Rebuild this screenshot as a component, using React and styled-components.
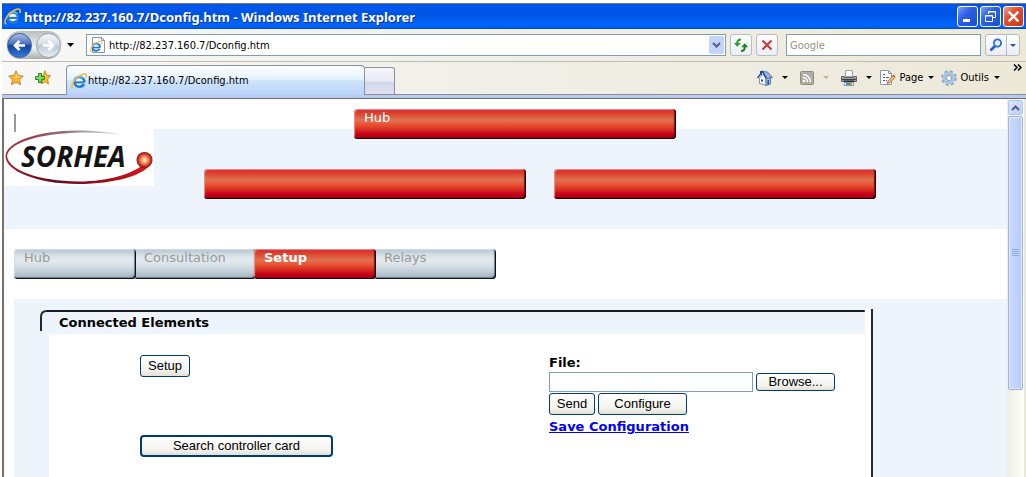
/* ^ App ^ */
/* browser window (title bar, address row, tab row) with the Sorhea configuration page inside */

import React, { useState }            from 'react';
import styled, { createGlobalStyle }  from 'styled-components';

const GlobalStyle = createGlobalStyle`
  * {
    box-sizing: border-box;
  }

  body {
    margin: 0;
    background-color: white;
    overflow: hidden;
  }

  button, input {
    margin: 0;
    padding: 0;
    font: inherit;
    color: inherit;
  }
`;

const Window = styled.div`
  height: 100vh;
  padding: 3px 0 0 2px;
  display: flex;
  flex-direction: column;
  font-family: "DejaVu Sans Condensed", "Noto Sans", sans-serif;
  font-size: 11px;
  color: black;
`;

/* title bar */

const TitleBar = styled.header`
  height: 26px;
  flex: none;
  padding: 0 2px 0 2px;
  display: flex;
  align-items: center;
  gap: 3px;
  border-top: 1px solid #7d7766;
  background: linear-gradient(#0a50d8, #0058ee 3px, #0053e1 10px, #0065fc 20px, #0062f6 23px, #0046cf);
`;

const Title = styled.h1`
  margin: 0;
  flex: 1;
  font-family: "Noto Sans", sans-serif;
  font-size: 13px;
  line-height: 16px;
  font-weight: bold;
  color: white;
  text-shadow: 1px 1px #0a2f8c;
`;

const WindowButton = styled.button`
  width: 21px;
  height: 21px;
  display: flex;
  align-items: center;
  justify-content: center;
  border: 1px solid white;
  border-radius: 3px;
  background: ${props => props.$close
    ? 'linear-gradient(135deg, #f0a088, #e2502c 40%, #c9371a)'
    : 'linear-gradient(135deg, #7ba0f4, #2c5fe4 40%, #1f4fd0)'};
`;

const WindowButtons = styled.div`
  display: flex;
  gap: 2px;
`;

/* toolbars */

const Bar = styled.div`
  flex: none;
  display: flex;
  background: linear-gradient(to right, #f8f8f8, #f1f0ea 40%, #ece9d8);
`;

const AddressRow = styled(Bar)`
  height: 33px;
  padding: 0 6px 0 4px;
  align-items: center;
  gap: 4px;
  border-bottom: 1px solid #c0beb4;
`;

const HistoryButtons = styled.div`
  width: 56px;
  height: 28px;
  display: flex;
  align-items: center;
  justify-content: space-between;
  padding: 0 1px;
  border-radius: 14px;
  background: linear-gradient(#b9bcc0, #f2f3f4 60%, #a9abad);
`;

const RoundButton = styled.button`
  width: 25px;
  height: 25px;
  display: flex;
  align-items: center;
  justify-content: center;
  border: 1px solid ${props => props.$active ? '#3a5c98' : '#9aa4ae'};
  border-radius: 50%;
  background: ${props => props.$active
    ? 'linear-gradient(#a9bde2, #4a74be 42%, #1243a2 52%, #2f7fd8)'
    : 'linear-gradient(#f4f6f8, #d8dfe6 42%, #bccad6 52%, #e6eef4)'};
`;

const PlainButton = styled.button`
  display: flex;
  align-items: center;
  gap: 3px;
  border: 0;
  background: none;
`;

const HistoryMenu = styled(PlainButton)`
  width: 8px;
  justify-content: center;
`;

const Field = styled.div`
  height: 22px;
  display: flex;
  align-items: center;
  border: 1px solid #7f9db9;
  background-color: white;
`;

const AddressField = styled(Field)`
  flex: 1;
  margin-left: 8px;
  padding: 0 1px 0 3px;
`;

const SearchField = styled(Field)`
  width: 195px;
  margin-left: 4px;
`;

const FieldInput = styled.input`
  flex: 1;
  min-width: 0;
  margin-left: 3px;
  border: 0;
  outline: 0;
  background: none;

  &::placeholder {
    color: #96938a;
    opacity: 1;
  }
`;

const DropButton = styled.button`
  width: 15px;
  height: 18px;
  display: flex;
  align-items: center;
  justify-content: center;
  border: 0;
  border-radius: 2px;
  background-color: #c3d3fb;
`;

const ToolButton = styled.button`
  width: 22px;
  height: 22px;
  display: flex;
  align-items: center;
  justify-content: center;
  border: 1px solid #b4bccb;
  border-radius: 3px;
  background: linear-gradient(#fdfdfd, #eceef6);
`;

const SplitButton = styled.div`
  display: flex;
`;

const SplitMain = styled(ToolButton)`
  border-radius: 3px 0 0 3px;
`;

const SplitMenu = styled(ToolButton)`
  width: 14px;
  margin-left: -1px;
  border-radius: 0 3px 3px 0;
`;

const TabRow = styled(Bar)`
  height: 33px;
  align-items: flex-end;
  padding-left: 6px;
  border-bottom: 1px solid #8d8f96;
`;

const Favourites = styled.div`
  width: 58px;
  height: 33px;
  display: flex;
  align-items: center;
  gap: 11px;
`;

const Tab = styled.button`
  width: 299px;
  height: 30px;
  margin-bottom: -1px;
  padding: 0 4px;
  display: flex;
  align-items: center;
  gap: 1px;
  border: 1px solid #8d9099;
  border-bottom: 0;
  border-radius: 4px 4px 0 0;
  background: linear-gradient(#fdfeff, #e4f1fd 45%, #cfe5fb 50%, #b9d3f8);
`;

const NewTab = styled.button`
  width: 30px;
  height: 27px;
  border: 1px solid #8d9099;
  border-width: 1px 1px 0 0;
  border-radius: 0 3px 0 0;
  background: linear-gradient(#f6f6fb, #e9eaf4 50%, #d3d6ea 55%, #dfe1f0);
`;

const Commands = styled.div`
  flex: 1;
  height: 33px;
  padding-right: 3px;
  display: flex;
  align-items: center;
  justify-content: flex-end;
`;

const Command = styled(PlainButton)`
  margin-right: ${props => props.$near ? '7px' : '12px'};

  svg:last-child {
    margin-left: ${props => props.$label ? '2px' : '6px'};
  }
`;

const More = styled(PlainButton)`
  height: 27px;
  align-items: flex-start;
  margin-left: 6px;
`;

const TabBase = styled.div`
  height: 4px;
  flex: none;
  border-bottom: 1px solid #716f64;
  background-color: #b8c9f2;
`;

/* page */

const Viewport = styled.div`
  flex: 1;
  min-height: 0;
  display: flex;
  border-left: 2px solid #77736a;
  border-right: 2px solid #ece9d8;
`;

const Page = styled.main`
  flex: 1;
  min-width: 0;
  overflow: hidden;
  font-family: Verdana, "DejaVu Sans", sans-serif;
  font-size: 13px;
  line-height: 16px;
  background-color: white;
`;

const Banner = styled.div`
  height: 130px;
  display: flex;
  gap: 50px;
  background: linear-gradient(white 30px, #edf4fc 30px);
`;

const Brand = styled.div`
  width: 150px;
  padding-top: 15px;
  display: flex;
  flex-direction: column;
`;

const Caret = styled.span`
  width: 2px;
  height: 18px;
  margin: 0 0 -3px 10px;
  z-index: 1;
  background-color: #999;
`;

const Plates = styled.div`
  padding-top: 10px;
  display: grid;
  grid-template-columns: 322px 322px;
  grid-auto-rows: 30px;
  gap: 30px 28px;
`;

const red = 'linear-gradient(#c8202c, #d9303a 2px, #dd3f28 4px, #dd7355 11px, #ea5636 15px, #d93420 20px, #c8001a 25px, #b0000e)';
const grey = 'linear-gradient(#b4c2cc, #c3d0d9 3px, #dbe3e8 7px, #e4eaee 12px, #d5dee4 17px, #c3cfd8 22px, #9fb1bf)';

const Plate = styled.div`
  width: 322px;
  height: 30px;
  padding: 1px 0 0 10px;
  color: white;
  border-radius: 4px;
  background: ${red};
  box-shadow: inset -1px -1px #1a0004, inset -2px -2px 1px #8c0812, inset 1px 1px 1px #f09088;
`;

const TopPlate = styled(Plate)`
  grid-column: 1 / 3;
  margin-left: 150px;
`;

const Menu = styled.nav`
  padding: 20px 0 20px 10px;
  display: flex;
`;

const MenuItem = styled.a`
  width: 122px;
  height: 30px;
  margin-right: -2px;
  padding: 1px 0 0 10px;
  z-index: ${props => props.$layer};
  color: ${props => props.$active ? 'white' : '#999'};
  font-weight: ${props => props.$active ? 'bold' : 'normal'};
  text-decoration: none;
  border-radius: 4px;
  background: ${props => props.$active ? red : grey};
  box-shadow:
    inset -1px -1px #0c1016,
    inset -2px -2px 1px ${props => props.$active ? '#8c0812' : '#6f8290'},
    inset 1px 1px 1px ${props => props.$active ? '#f09088' : '#d4dee6'};
`;

const Body = styled.div`
  height: 100%;
  margin-left: 10px;
  padding: 10px 0 0 26px;
  background-color: #edf4fb;
`;

const Panel = styled.section`
  max-width: 833px;
  height: 100%;
  padding-right: 5px;
  border-right: 2px solid #2c2a2e;
  background: linear-gradient(to left, white 6px, transparent 6px);
`;

const PanelTitle = styled.h2`
  height: 25px;
  margin: 0;
  padding: 6px 0 0 19px;
  position: relative;
  font-size: 13px;
  line-height: 16px;
`;

/* rounded frame line over the panel title */
const Frame = styled.svg`
  position: absolute;
  top: 0;
  left: 0;
  width: 100%;
  height: 25px;
`;

const PanelBody = styled.div`
  height: 100%;
  margin-left: 9px;
  padding: 21px 0 0 91px;
  display: flex;
  border-right: 1px solid #edf4fb;
  background-color: white;
`;

const Actions = styled.div`
  width: 409px;
  display: flex;
  flex-direction: column;
  align-items: flex-start;
  gap: 58px;
`;

const Button = styled.button`
  width: ${props => props.$width};
  height: ${props => props.$low ? '18px' : '22px'};
  font-family: "Liberation Sans", Arial, sans-serif;
  font-size: 13px;
  line-height: 16px;
  border: ${props => props.$default ? 2 : 1}px solid #003c74;
  border-radius: ${props => props.$default ? 4 : 3}px;
  background: linear-gradient(white, #f4f3ee 70%, #e2dfd4);
`;

const Form = styled.form`
  display: flex;
  flex-direction: column;
  align-items: flex-start;
`;

const Label = styled.label`
  font-weight: bold;
`;

const FormRow = styled.div`
  height: 22px;
  display: flex;
  align-items: center;
  gap: 3px;
`;

const FileInput = styled.input`
  width: 204px;
  height: 20px;
  padding: 0 3px;
  border: 1px solid #7f9db9;
  background-color: white;
`;

const SaveLink = styled.a`
  margin-top: 4px;
  color: #0000ff;
  font-weight: bold;
  text-decoration: underline;
`;

/* scroll bar */

const Scroll = styled.div`
  width: 17px;
  flex: none;
  padding: 1px;
  display: flex;
  flex-direction: column;
  gap: 1px;
  background: linear-gradient(to right, #eeede5, #fefefb);
`;

const ScrollButton = styled.button`
  width: 15px;
  height: 15px;
  display: flex;
  align-items: center;
  justify-content: center;
  border: 1px solid #b3c7f5;
  border-radius: 2px;
  background: linear-gradient(135deg, #dde7fe, #b9cdfa);
`;

const Thumb = styled.div`
  height: 73%;
  display: flex;
  align-items: center;
  justify-content: center;
  border: 1px solid #98b2ee;
  border-radius: 2px;
  box-shadow: inset 0 0 0 1px #e4ecff;
  background: linear-gradient(to right, #c9d7fc, #c2d3fc 60%, #b2c7f6);
`;

/* drawings */

const Explorer = ({ size, sheet }) => (
  <svg width={size} height={size} viewBox="0 0 16 16">
    {sheet && <path d="M2.5.5h9l3 3v12h-12z" fill="white" stroke="#8b94a3" />}
    {sheet && <path d="M11.5.5v3h3" fill="none" stroke="#8b94a3" />}
    <g transform={sheet ? 'translate(0 3.500) scale(.75)' : undefined}>
      <circle cx="8.300" cy="8.800" r="5" fill="#e8f5ff" />
      <path d="M13.200 9.200C13.500 5.800 11.200 4 8.400 4 5.500 4 3.500 6.200 3.500 8.900s2 4.800 4.900 4.800c2 0 3.600-.9 4.400-2.500" fill="none" stroke="#1f7ad8" strokeWidth="2.600" />
      <path d="M4 9.400h9.500" stroke="#1f7ad8" strokeWidth="2" />
      <path d="M3.800 7.200C4.600 5 6.300 3.700 8.600 3.700c1.700 0 3 .7 3.800 1.800" fill="none" stroke="#6cc0f8" strokeWidth="1.200" />
      <path d="M2.400 14.800C-.2 15 .4 11.200 3.600 7.200 7.200 2.900 12.800-.1 14.900 1.400c.8.7.6 2-.1 3.400" fill="none" stroke="#f4bc38" strokeWidth="1.400" />
    </g>
  </svg>
);

const Arrow = ({ back }) => (
  <svg width="15" height="15" viewBox="0 0 15 15">
    <path
      d="M7.500 3 3 7.500 7.500 12M3.500 7.500h9.500"
      transform={back ? undefined : 'rotate(180 7.500 7.500)'}
      fill="none" stroke="white" strokeWidth="2.600"
    />
  </svg>
);

const Down = ({ color = 'black' }) => (
  <svg width="7" height="4" viewBox="0 0 7 4"><path d="M0 0h7L3.500 4z" fill={color} /></svg>
);

const SmallDown = ({ color = 'black' }) => (
  <svg width="6" height="3" viewBox="0 0 6 3"><path d="M0 0h6L3 3z" fill={color} /></svg>
);

const Chevron = ({ up }) => (
  <svg width="9" height="6" viewBox="0 0 9 6">
    <path d={up ? 'M1 5 4.500 1.500 8 5' : 'M1 1l3.500 3.500L8 1'} fill="none" stroke="#4d6185" strokeWidth="2" />
  </svg>
);

const Cross = ({ size, color }) => (
  <svg width={size} height={size} viewBox="0 0 12 12">
    <path d="M1.500 1.500l9 9M10.500 1.500l-9 9" stroke={color} strokeWidth="2.200" />
  </svg>
);

const Refresh = () => (
  <svg width="16" height="16" viewBox="0 0 16 16">
    <path d="M8 2.500C5.500 2.500 4.200 4 4.200 6.500" fill="none" stroke="#2c9a2c" strokeWidth="2" />
    <path d="M.8 6h7L4.300 9.800z" fill="#2c9a2c" />
    <path d="M8 14c2.500 0 3.800-1.500 3.800-4" fill="none" stroke="#1f8420" strokeWidth="2" />
    <path d="M8.200 10.200h7L11.700 6.200z" fill="#1f8420" />
  </svg>
);

const Magnifier = () => (
  <svg width="14" height="14" viewBox="0 0 14 14">
    <path d="M6 8 1.500 12.500" stroke="#2459d6" strokeWidth="2.600" />
    <circle cx="8.500" cy="5" r="3.600" fill="#e4f0ff" stroke="#2f6be0" strokeWidth="1.800" />
  </svg>
);

const starPath = 'M8 .8l2.200 4.700 5.100.6-3.800 3.500 1 5.100L8 12.200l-4.500 2.500 1-5.100L.7 6.100l5.100-.6z';

const Star = () => (
  <svg width="16" height="16" viewBox="0 0 16 16">
    <path d={starPath} fill="#fdb52d" stroke="#b8741c" strokeWidth=".8" />
    <path d="M8 3l1.300 3.300 3.200.4-5 1.300z" fill="#ffe48c" />
  </svg>
);

const AddStar = () => (
  <svg width="16" height="16" viewBox="0 0 16 16">
    <path d={starPath} transform="translate(4 0) scale(.75 .95)" fill="#fdbf2d" stroke="#c07a12" />
    <path d="M3.500 3.500h3v3h3v3h-3v3h-3v-3h-3v-3h3z" fill="#7fd85c" stroke="#1f8a26" />
  </svg>
);

const Home = () => (
  <svg width="16" height="16" viewBox="0 0 16 16">
    <path d="M3 1h2v4H3z" fill="#2040a8" />
    <path d="M2.500 8 6 4.500l3 4v7l-6.500-2z" fill="#f4f7fc" stroke="#8294b4" />
    <path d="M9 8.500l4.500-1V14L9 15.500z" fill="#a9bede" stroke="#6078a4" />
    <path d="M5.500 1.500l5 .5 5 5.500-6.500 1z" fill="#9cb4dc" stroke="#5470a8" />
    <path d="M.5 8 5.500 1.500 9.500 8.500" fill="none" stroke="#2848a8" strokeWidth="1.300" />
    <path d="M4 9.500h2v2H4z" fill="#2a4480" />
    <path d="M10.500 10H12v4.200l-1.500.5z" fill="#1c4cb0" />
  </svg>
);

const Feed = () => (
  <svg width="14" height="14" viewBox="0 0 14 14">
    <rect x=".5" y=".5" width="13" height="13" rx="1" fill="#b0ada4" stroke="#8e8b82" />
    <circle cx="4" cy="10" r="1.300" fill="white" />
    <path d="M3 6.500c2.500 0 4.500 2 4.500 4.500M3 3.500c4 0 7.500 3.500 7.500 7.500" fill="none" stroke="white" strokeWidth="1.400" />
  </svg>
);

const Printer = () => (
  <svg width="16" height="16" viewBox="0 0 16 16">
    <path d="M4.500.5h7v6h-7z" fill="#fafafa" stroke="#a0a0a0" />
    <path d="M.5 6.500h3v1h9v-1h3v5H.5z" fill="#9c9fa4" stroke="#606266" />
    <path d="M1 9.500h14" stroke="#3c3e42" />
    <path d="M3 10.500h10V12H3z" fill="#2a2c30" />
    <path d="M3.500 12.500h9l.5 3H3z" fill="#e4f0ff" stroke="#8c9cb4" />
    <path d="M5 14h2" stroke="#2c9ad0" strokeWidth="2" />
    <path d="M7 14h2" stroke="#48a048" strokeWidth="2" />
    <path d="M9 14h2" stroke="#e08838" strokeWidth="2" />
  </svg>
);

const PageIcon = () => (
  <svg width="17" height="16" viewBox="0 0 17 16">
    <path d="M1.500.5h8l3 3v11h-11z" fill="#fbfcff" stroke="#8c98b0" />
    <path d="M9.500.5v3h3" fill="none" stroke="#8c98b0" />
    <path d="M4 4.500h2M4 7.500h2M7 7.500h3M4 10.500h2M7 10.500h1" stroke="#3c58a0" />
    <path d="M8 13.500l1-2.500 5-5.500 2 1.800-5 5.400z" fill="#f0c070" stroke="#94683a" strokeWidth=".8" />
    <path d="M13.500 5.500l1-1 2 1.800-1 1z" fill="#d04a34" />
  </svg>
);

const Gear = () => (
  <svg width="16" height="16" viewBox="0 0 16 16">
    <circle cx="8" cy="8" r="6.500" fill="none" stroke="#8aa4c0" strokeWidth="2.600" strokeDasharray="2.900 2.205" />
    <circle cx="8" cy="8" r="4.600" fill="#f4f4ec" stroke="#a8c4e0" strokeWidth="3.400" />
    <circle cx="8" cy="8" r="2.600" fill="#f8f6ec" stroke="#6f8cae" strokeWidth=".9" />
  </svg>
);

const Logo = () => (
  <svg width="150" height="57" viewBox="0 0 150 57">
    <defs>
      <linearGradient id="ring" x1="0" x2="1" y1="0" y2="0">
        <stop offset="0" stopColor="#b01828" />
        <stop offset=".35" stopColor="#5a1020" />
        <stop offset=".7" stopColor="#a00c1c" />
        <stop offset="1" stopColor="#e01818" />
      </linearGradient>
      <linearGradient id="fade" x1="0" x2="1" y1="0" y2="0">
        <stop offset="0" stopColor="#a81c2c" />
        <stop offset=".5" stopColor="#8c7478" />
        <stop offset="1" stopColor="#eeeeee" />
      </linearGradient>
      <radialGradient id="ball">
        <stop offset="0" stopColor="#fff4c8" />
        <stop offset=".4" stopColor="#f49a60" />
        <stop offset=".75" stopColor="#d83828" />
        <stop offset="1" stopColor="#801018" />
      </radialGradient>
    </defs>
    <rect width="150" height="57" fill="white" />
    <path d="M1.500 27C3 12 35 2 72 1.500c20 0 34 1.500 47 4.500-14-1.700-28-2.700-46-2.300C38 4.500 5 13 3 27z" fill="url(#fade)" />
    <path d="M1.500 27c0 15 31 27.800 73 28 36 0 66-9 72-20l-6-1c-9 10-35 18.500-66 18.500C34 52 4 41 3 27z" fill="url(#ring)" />
    <text
      x="17" y="38" fontFamily="'Open Sans', sans-serif" fontSize="28" fontWeight="bold" fontStyle="italic" fill="#141416"
    >SORHEA</text>
    <circle cx="140.500" cy="31" r="8" fill="url(#ball)" />
  </svg>
);

const menu = [
  { title: 'Hub',          layer: 1 },
  { title: 'Consultation', layer: 0 },
  { title: 'Setup',        layer: 2 },
  { title: 'Relays',       layer: 0 }
];

const App = () => {
  const [address, setAddress] = useState('http://82.237.160.7/Dconfig.htm')
  const [search, setSearch] = useState('')
  const [file, setFile] = useState('')

  return (
    <Window>
      <GlobalStyle />

      <TitleBar>
        <Explorer size={17} />
        <Title>http://82.237.160.7/Dconfig.htm - Windows Internet Explorer</Title>
        <WindowButtons>
          <WindowButton aria-label="Minimize">
            <svg width="13" height="13"><path d="M2 9h7v3H2z" fill="white" /></svg>
          </WindowButton>
          <WindowButton aria-label="Restore">
            <svg width="13" height="13">
              <path d="M4.500 4V1.500h7v6H9M4 2h8M1.500 5.500h7v6h-7zM1 6h8" fill="none" stroke="white" />
            </svg>
          </WindowButton>
          <WindowButton $close aria-label="Close"><Cross size={13} color="white" /></WindowButton>
        </WindowButtons>
      </TitleBar>

      <AddressRow>
        <HistoryButtons>
          <RoundButton $active aria-label="Back"><Arrow back /></RoundButton>
          <RoundButton aria-label="Forward"><Arrow /></RoundButton>
        </HistoryButtons>
        <HistoryMenu aria-label="Recent pages"><Down /></HistoryMenu>
        <AddressField>
          <Explorer size={16} sheet />
          <FieldInput aria-label="Address" value={address} onChange={e => setAddress(e.target.value)} />
          <DropButton aria-label="Show addresses"><Chevron /></DropButton>
        </AddressField>
        <ToolButton aria-label="Refresh"><Refresh /></ToolButton>
        <ToolButton aria-label="Stop"><Cross size={12} color="#cc3b3b" /></ToolButton>
        <SearchField>
          <FieldInput aria-label="Search" placeholder="Google" value={search} onChange={e => setSearch(e.target.value)} />
        </SearchField>
        <SplitButton>
          <SplitMain aria-label="Search the web"><Magnifier /></SplitMain>
          <SplitMenu aria-label="Search options"><SmallDown color="#1c50c8" /></SplitMenu>
        </SplitButton>
      </AddressRow>

      <TabRow>
        <Favourites>
          <PlainButton aria-label="Favourites"><Star /></PlainButton>
          <PlainButton aria-label="Add to favourites"><AddStar /></PlainButton>
        </Favourites>
        <Tab>
          <Explorer size={16} />
          http://82.237.160.7/Dconfig.htm
        </Tab>
        <NewTab aria-label="New tab" />
        <Commands>
          <Command aria-label="Home"><Home /><SmallDown /></Command>
          <Command aria-label="Feeds"><Feed /><SmallDown color="#b4b2aa" /></Command>
          <Command $near aria-label="Print"><Printer /><SmallDown /></Command>
          <Command $near $label><PageIcon />Page<SmallDown /></Command>
          <Command $near $label><Gear />Outils<SmallDown /></Command>
          <More aria-label="More commands">
            <svg width="10" height="7"><path d="M1 .5l3 3-3 3M5 .5l3 3-3 3" fill="none" stroke="black" strokeWidth="1.500" /></svg>
          </More>
        </Commands>
      </TabRow>
      <TabBase />

      <Viewport>
        <Page>
          <Banner>
            <Brand>
              <Caret />
              <Logo />
            </Brand>
            <Plates>
              <TopPlate>Hub</TopPlate>
              <Plate />
              <Plate />
            </Plates>
          </Banner>

          <Menu>
            {
              menu.map(item =>
                <MenuItem key={item.title} href="#" $layer={item.layer} $active={item.title === 'Setup'}>
                  {item.title}
                </MenuItem>
              )
            }
          </Menu>

          <Body>
            <Panel>
              <PanelTitle>
                <Frame>
                  <path d="M1 22V8c0-4 2-6 6-6" fill="none" stroke="#2a262c" strokeWidth="2" />
                  <rect x="7" y="1" width="99%" height="2" fill="#1c1a1e" />
                </Frame>
                Connected Elements
              </PanelTitle>
              <PanelBody>
                <Actions>
                  <Button $width="50px">Setup</Button>
                  <Button $width="193px" $default>Search controller card</Button>
                </Actions>
                <Form onSubmit={e => e.preventDefault()}>
                  <Label htmlFor="file">File:</Label>
                  <FormRow>
                    <FileInput id="file" value={file} onChange={e => setFile(e.target.value)} />
                    <Button type="button" $width="79px" $low>Browse...</Button>
                  </FormRow>
                  <FormRow>
                    <Button $width="46px">Send</Button>
                    <Button type="button" $width="89px">Configure</Button>
                  </FormRow>
                  <SaveLink href="#">Save Configuration</SaveLink>
                </Form>
              </PanelBody>
            </Panel>
          </Body>
        </Page>

        <Scroll>
          <ScrollButton aria-label="Scroll up"><Chevron up /></ScrollButton>
          <Thumb>
            <svg width="7" height="8"><path d="M0 .5h7M0 2.500h7M0 4.500h7M0 6.500h7" stroke="#8caef0" /></svg>
          </Thumb>
        </Scroll>
      </Viewport>
    </Window>
  )
}

export default App
